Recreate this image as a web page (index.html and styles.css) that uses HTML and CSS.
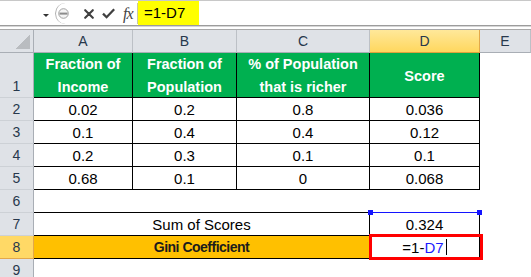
FILE: index.html
```html
<!DOCTYPE html>
<html lang="en">

<head>
    <meta charset="UTF-8">
    <meta name="viewport" content="width=device-width, initial-scale=1.0">
    <title>Gini Coefficient</title>
    <link rel="stylesheet" href="styles.css">
</head>

<body>

    <!-- Formula bar -->
    <div class="fbar">
        <div class="namebox"><span class="arrow"></span></div>
        <div class="fbtns">
            <svg class="knob" width="11" height="11" viewBox="0 0 11 11">
                <circle cx="5.5" cy="5.5" r="4.8" fill="#f4f4f4" stroke="#9a9a9a" stroke-width="0.9"/>
                <rect x="1.5" y="4.6" width="8" height="2" fill="#8c8c8c"/>
            </svg>
            <svg class="ico-x" width="10" height="10" viewBox="0 0 10 10">
                <path d="M1.2 1.2 L8.8 8.8 M8.8 1.2 L1.2 8.8" stroke="#404040" stroke-width="2.1" stroke-linecap="round"/>
            </svg>
            <svg class="ico-ok" width="13" height="11" viewBox="0 0 13 11">
                <path d="M1 5.6 L4.6 9.2 L12.2 1.2" fill="none" stroke="#404040" stroke-width="2.3"/>
            </svg>
            <span class="fx">fx</span>
        </div>
        <div class="formula">=1-D7</div>
    </div>
    <div class="strip"></div>

    <!-- Sheet -->
    <div class="sheet">
        <div class="corner"><span class="tri"></span></div>
        <div class="hd">A</div>
        <div class="hd">B</div>
        <div class="hd">C</div>
        <div class="hd sel">D</div>
        <div class="hd">E</div>

        <div class="rh low">1</div>
        <div class="c b g">Fraction of<br>Income</div>
        <div class="c b g">Fraction of<br>Population</div>
        <div class="c b g">% of Population<br>that is richer</div>
        <div class="c b g">Score</div>
        <div class="c"></div>

        <div class="rh">2</div>
        <div class="c b">0.02</div>
        <div class="c b">0.2</div>
        <div class="c b">0.8</div>
        <div class="c b">0.036</div>
        <div class="c"></div>

        <div class="rh">3</div>
        <div class="c b">0.1</div>
        <div class="c b">0.4</div>
        <div class="c b">0.4</div>
        <div class="c b">0.12</div>
        <div class="c"></div>

        <div class="rh">4</div>
        <div class="c b">0.2</div>
        <div class="c b">0.3</div>
        <div class="c b">0.1</div>
        <div class="c b">0.1</div>
        <div class="c"></div>

        <div class="rh">5</div>
        <div class="c b">0.68</div>
        <div class="c b">0.1</div>
        <div class="c b">0</div>
        <div class="c b">0.068</div>
        <div class="c"></div>

        <div class="rh">6</div>
        <div class="c span3 bb"></div>
        <div class="c"></div>
        <div class="c"></div>

        <div class="rh">7</div>
        <div class="c span3 b">Sum of Scores</div>
        <div class="c b ref">0.324<span class="refline"></span></div>
        <div class="c"></div>

        <div class="rh sel">8</div>
        <div class="c span3 b gini">Gini Coefficient</div>
        <div class="c b active">=1-<span class="blue">D7</span><span class="caret"></span></div>
        <div class="c"></div>

        <div class="rh">9</div>
        <div class="c span3"></div>
        <div class="c"></div>
        <div class="c"></div>
    </div>

</body>

</html>
```

FILE: styles.css
```css
* {
    margin: 0;
    padding: 0;
    box-sizing: border-box;
}

body {
    width: 531px;
    height: 277px;
    overflow: hidden;
    background-color: #ffffff;
    font-family: "Liberation Sans", Arial, sans-serif;
    color: #000000;
}

/* formula bar */
.fbar {
    height: 26px;
    display: flex;
    border-top: 1px solid #c8c8c8;
    border-bottom: 1px solid #9c9c9c;
}

.namebox {
    width: 55px;
}

.arrow {
    display: block;
    width: 0;
    height: 0;
    margin: 13px 0 0 43px;
    border-left: 3px solid transparent;
    border-right: 3px solid transparent;
    border-top: 3px solid #333333;
}

.fbtns {
    width: 83px;
    height: 21px;
    margin-top: 2px;
    display: flex;
    align-items: center;
    border-left: 1px solid #b0b0b0;
    border-radius: 11px 0 0 11px;
    border-right: 1px solid #c8c8a0;
}

.knob {
    margin-left: 2px;
}

.ico-x {
    margin-left: 15px;
}

.ico-ok {
    margin-left: 8px;
}

.fx {
    margin-left: 8px;
    font-family: "Liberation Serif", serif;
    font-style: italic;
    font-size: 16px;
    color: #444444;
    letter-spacing: -1px;
}

.formula {
    width: 61px;
    background-color: #ffff00;
    font-size: 15px;
    line-height: 24px;
    padding-left: 6px;
}

.strip {
    height: 4px;
    border-top: 1px solid #d6d6d6;
    border-bottom: 1px solid #a8a8a8;
}

/* sheet grid */
.sheet {
    display: grid;
    grid-template-columns: 34px 99px 104px 133px 110px 1fr;
    grid-template-rows: 23px 45px repeat(8, 23px);
    font-size: 15px;
}

.corner {
    background-color: #dfe2e7;
    border-right: 1px solid #a9aeb5;
    border-bottom: 1px solid #a9aeb5;
    display: flex;
    justify-content: flex-end;
    align-items: flex-end;
    padding: 0 3px 3px 0;
}

.tri {
    width: 14px;
    height: 14px;
    background: linear-gradient(to bottom right, transparent 50%, #b9bcc0 50%);
}

.hd,
.rh {
    display: flex;
    align-items: center;
    justify-content: center;
    background-color: #dfe2e7;
    font-size: 14px;
    color: #27384c;
}

.hd {
    border-right: 1px solid #bcc0c6;
    border-bottom: 1px solid #a9aeb5;
}

.rh {
    border-right: 1px solid #a9aeb5;
    border-bottom: 1px solid #cdd1d6;
}

.rh.low {
    align-items: flex-end;
    padding-bottom: 3px;
}

.hd.sel {
    background: linear-gradient(#ffe89a, #ffd75e);
    border-right-color: #e3a84a;
    border-bottom-color: #e0a23c;
}

.rh.sel {
    background-color: #ffd966;
    border-right-color: #e3a84a;
    border-bottom-color: #e3a84a;
}

.c {
    display: flex;
    align-items: center;
    justify-content: center;
    text-align: center;
    border-right: 1px solid transparent;
    border-bottom: 1px solid transparent;
}

.b {
    border-right-color: #000000;
    border-bottom-color: #000000;
}

.bb {
    border-bottom-color: #000000;
}

.span3 {
    grid-column: span 3;
}

.g {
    background-color: #00b050;
    color: #ffffff;
    font-weight: bold;
    font-size: 14.5px;
    line-height: 23px;
    padding-top: 2px;
}

.gini {
    background-color: #ffc000;
    font-weight: bold;
    font-size: 14px;
    letter-spacing: -0.5px;
    color: #1c1c1c;
}

/* reference highlight on D7 */
.ref {
    position: relative;
}

.refline {
    position: absolute;
    top: -1px;
    left: 0;
    right: -1px;
    height: 1px;
    background-color: #1414ff;
}

.refline::before,
.refline::after {
    content: "";
    position: absolute;
    top: -2px;
    width: 5px;
    height: 5px;
    background-color: #1414ff;
}

.refline::before {
    left: -2px;
}

.refline::after {
    right: -2px;
}

/* active cell D8 */
.active {
    position: relative;
}

.active::after {
    content: "";
    position: absolute;
    top: -2px;
    left: -1px;
    right: -4px;
    bottom: -2px;
    border: 3px solid #ff0000;
}

.blue {
    color: #1a1aff;
}

.caret {
    display: inline-block;
    width: 1px;
    height: 16px;
    margin-left: 2px;
    background-color: #000000;
}
```
